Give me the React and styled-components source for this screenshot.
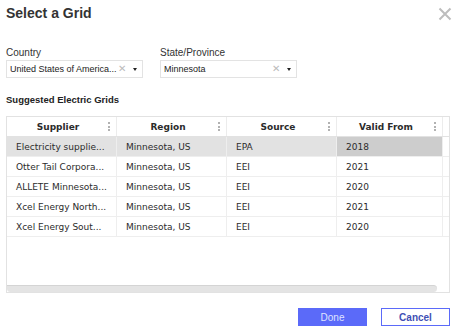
import React from "react";
import styled, { createGlobalStyle } from "styled-components";

const GlobalStyle = createGlobalStyle`
  html, body {
    margin: 0;
    padding: 0;
    background: #fff;
  }
  * {
    box-sizing: border-box;
  }
`;

const Dialog = styled.div`
  width: 460px;
  height: 331px;
  padding: 5px 10px 0 6px;
  font-family: "Liberation Sans", Arial, sans-serif;
  color: #333;
  display: flex;
  flex-direction: column;
`;

const Header = styled.div`
  display: flex;
  justify-content: space-between;
  align-items: flex-start;
  height: 16px;
`;

const Title = styled.h2`
  margin: 0;
  font-size: 14px;
  line-height: 16px;
  font-weight: bold;
  color: #333;
`;

const CloseButton = styled.button`
  border: none;
  background: none;
  padding: 0;
  margin: 2px -2px 0 0;
  width: 14px;
  height: 14px;
  display: flex;
  cursor: pointer;
`;

const Filters = styled.div`
  display: flex;
  gap: 17px;
  margin-top: 26px;
`;

const Field = styled.div`
  display: flex;
  flex-direction: column;
  width: 137px;
`;

const Label = styled.label`
  font-size: 10px;
  line-height: 12px;
  color: #333;
  margin-bottom: 1px;
`;

const SelectBox = styled.div`
  height: 18px;
  border: 1px solid #e3e3e3;
  display: flex;
  align-items: center;
  padding: 0 5px 0 3px;
  font-size: 9px;
  color: #222;
`;

const SelectValue = styled.span`
  flex: 1;
  white-space: nowrap;
  overflow: hidden;
`;

const Clear = styled.span`
  color: #bbb;
  font-size: 10px;
  margin-right: 7px;
  line-height: 1;
`;

const Caret = styled.span`
  width: 0;
  height: 0;
  border-left: 2.5px solid transparent;
  border-right: 2.5px solid transparent;
  border-top: 3px solid #222;
`;

const SectionTitle = styled.h3`
  margin: 16px 0 0;
  font-size: 9.5px;
  line-height: 12px;
  font-weight: bold;
  color: #222;
`;

const Table = styled.div`
  margin-top: 10px;
  width: 444px;
  height: 177px;
  border: 1px solid #e2e2e2;
  display: flex;
  flex-direction: column;
  font-family: "DejaVu Sans", Verdana, sans-serif;
  font-size: 9px;
  color: #2b2b2b;
`;

const Row = styled.div`
  display: flex;
  height: 20px;
  flex-shrink: 0;
  border-bottom: 1px solid ${(p) => (p.head ? "#e2e2e2" : "#eeeeee")};
`;

const HeadCell = styled.div`
  width: ${(p) => p.w}px;
  display: flex;
  align-items: center;
  justify-content: center;
  position: relative;
  padding-right: 7px;
  font-weight: bold;
  border-right: 1px solid #ececec;
`;

const MenuDots = styled.span`
  position: absolute;
  right: 6px;
  top: 5px;
  display: flex;
  flex-direction: column;
  gap: 1.5px;
  & > i {
    width: 2px;
    height: 2px;
    background: #999;
    border-radius: 1px;
  }
`;

const Cell = styled.div`
  width: ${(p) => p.w}px;
  display: flex;
  align-items: center;
  padding-left: 9px;
  white-space: nowrap;
  border-right: 1px solid #eeeeee;
  background: ${(p) => (p.focus ? "#cdcdcd" : p.selected ? "#e2e2e2" : "#fff")};
`;

const Filler = styled.div`
  flex: 1;
`;

const ScrollTrack = styled.div`
  height: 7px;
  margin-right: 12px;
  background: #e4e4e4;
  border-top: 1px solid #d4d4d4;
  border-radius: 0 4px 4px 4px;
`;

const Footer = styled.div`
  display: flex;
  justify-content: flex-end;
  gap: 14px;
  margin-top: 15px;
`;

const Button = styled.button`
  width: 69px;
  height: 18px;
  padding: 0;
  font-family: "Liberation Sans", Arial, sans-serif;
  font-size: 10px;
  cursor: pointer;
  border: 1px solid #5b6af9;
  background: ${(p) => (p.primary ? "#5b6af9" : "#fff")};
  color: ${(p) => (p.primary ? "#dfe3ff" : "#3f4fb4")};
  font-weight: ${(p) => (p.primary ? "normal" : "bold")};
`;

const columns = [
  { key: "supplier", title: "Supplier", w: 110 },
  { key: "region", title: "Region", w: 110 },
  { key: "source", title: "Source", w: 110 },
  { key: "valid", title: "Valid From", w: 106 },
];

const grids = [
  { supplier: "Electricity supplie...", region: "Minnesota, US", source: "EPA", valid: "2018" },
  { supplier: "Otter Tail Corpora...", region: "Minnesota, US", source: "EEI", valid: "2021" },
  { supplier: "ALLETE Minnesota...", region: "Minnesota, US", source: "EEI", valid: "2020" },
  { supplier: "Xcel Energy North...", region: "Minnesota, US", source: "EEI", valid: "2021" },
  { supplier: "Xcel Energy Sout...", region: "Minnesota, US", source: "EEI", valid: "2020" },
];

const App = () => {
  const selected = 0;

  return (
    <>
      <GlobalStyle />
      <Dialog>
        <Header>
          <Title>Select a Grid</Title>
          <CloseButton aria-label="Close">
            <svg width="14" height="14" viewBox="0 0 14 14">
              <path d="M1.5 1.5 L12.5 12.5 M12.5 1.5 L1.5 12.5" stroke="#bdbdbd" strokeWidth="2" />
            </svg>
          </CloseButton>
        </Header>

        <Filters>
          <Field>
            <Label>Country</Label>
            <SelectBox>
              <SelectValue>United States of America...</SelectValue>
              <Clear>✕</Clear>
              <Caret />
            </SelectBox>
          </Field>
          <Field>
            <Label>State/Province</Label>
            <SelectBox>
              <SelectValue>Minnesota</SelectValue>
              <Clear>✕</Clear>
              <Caret />
            </SelectBox>
          </Field>
        </Filters>

        <SectionTitle>Suggested Electric Grids</SectionTitle>

        <Table>
          <Row head>
            {columns.map((c) => (
              <HeadCell key={c.key} w={c.w}>
                {c.title}
                <MenuDots>
                  <i />
                  <i />
                  <i />
                </MenuDots>
              </HeadCell>
            ))}
          </Row>
          {grids.map((g, i) => (
            <Row key={i}>
              {columns.map((c, j) => (
                <Cell
                  key={c.key}
                  w={c.w}
                  selected={i === selected}
                  focus={i === selected && j === columns.length - 1}
                >
                  {g[c.key]}
                </Cell>
              ))}
            </Row>
          ))}
          <Filler />
          <ScrollTrack />
        </Table>

        <Footer>
          <Button primary>Done</Button>
          <Button>Cancel</Button>
        </Footer>
      </Dialog>
    </>
  );
};

export default App;
